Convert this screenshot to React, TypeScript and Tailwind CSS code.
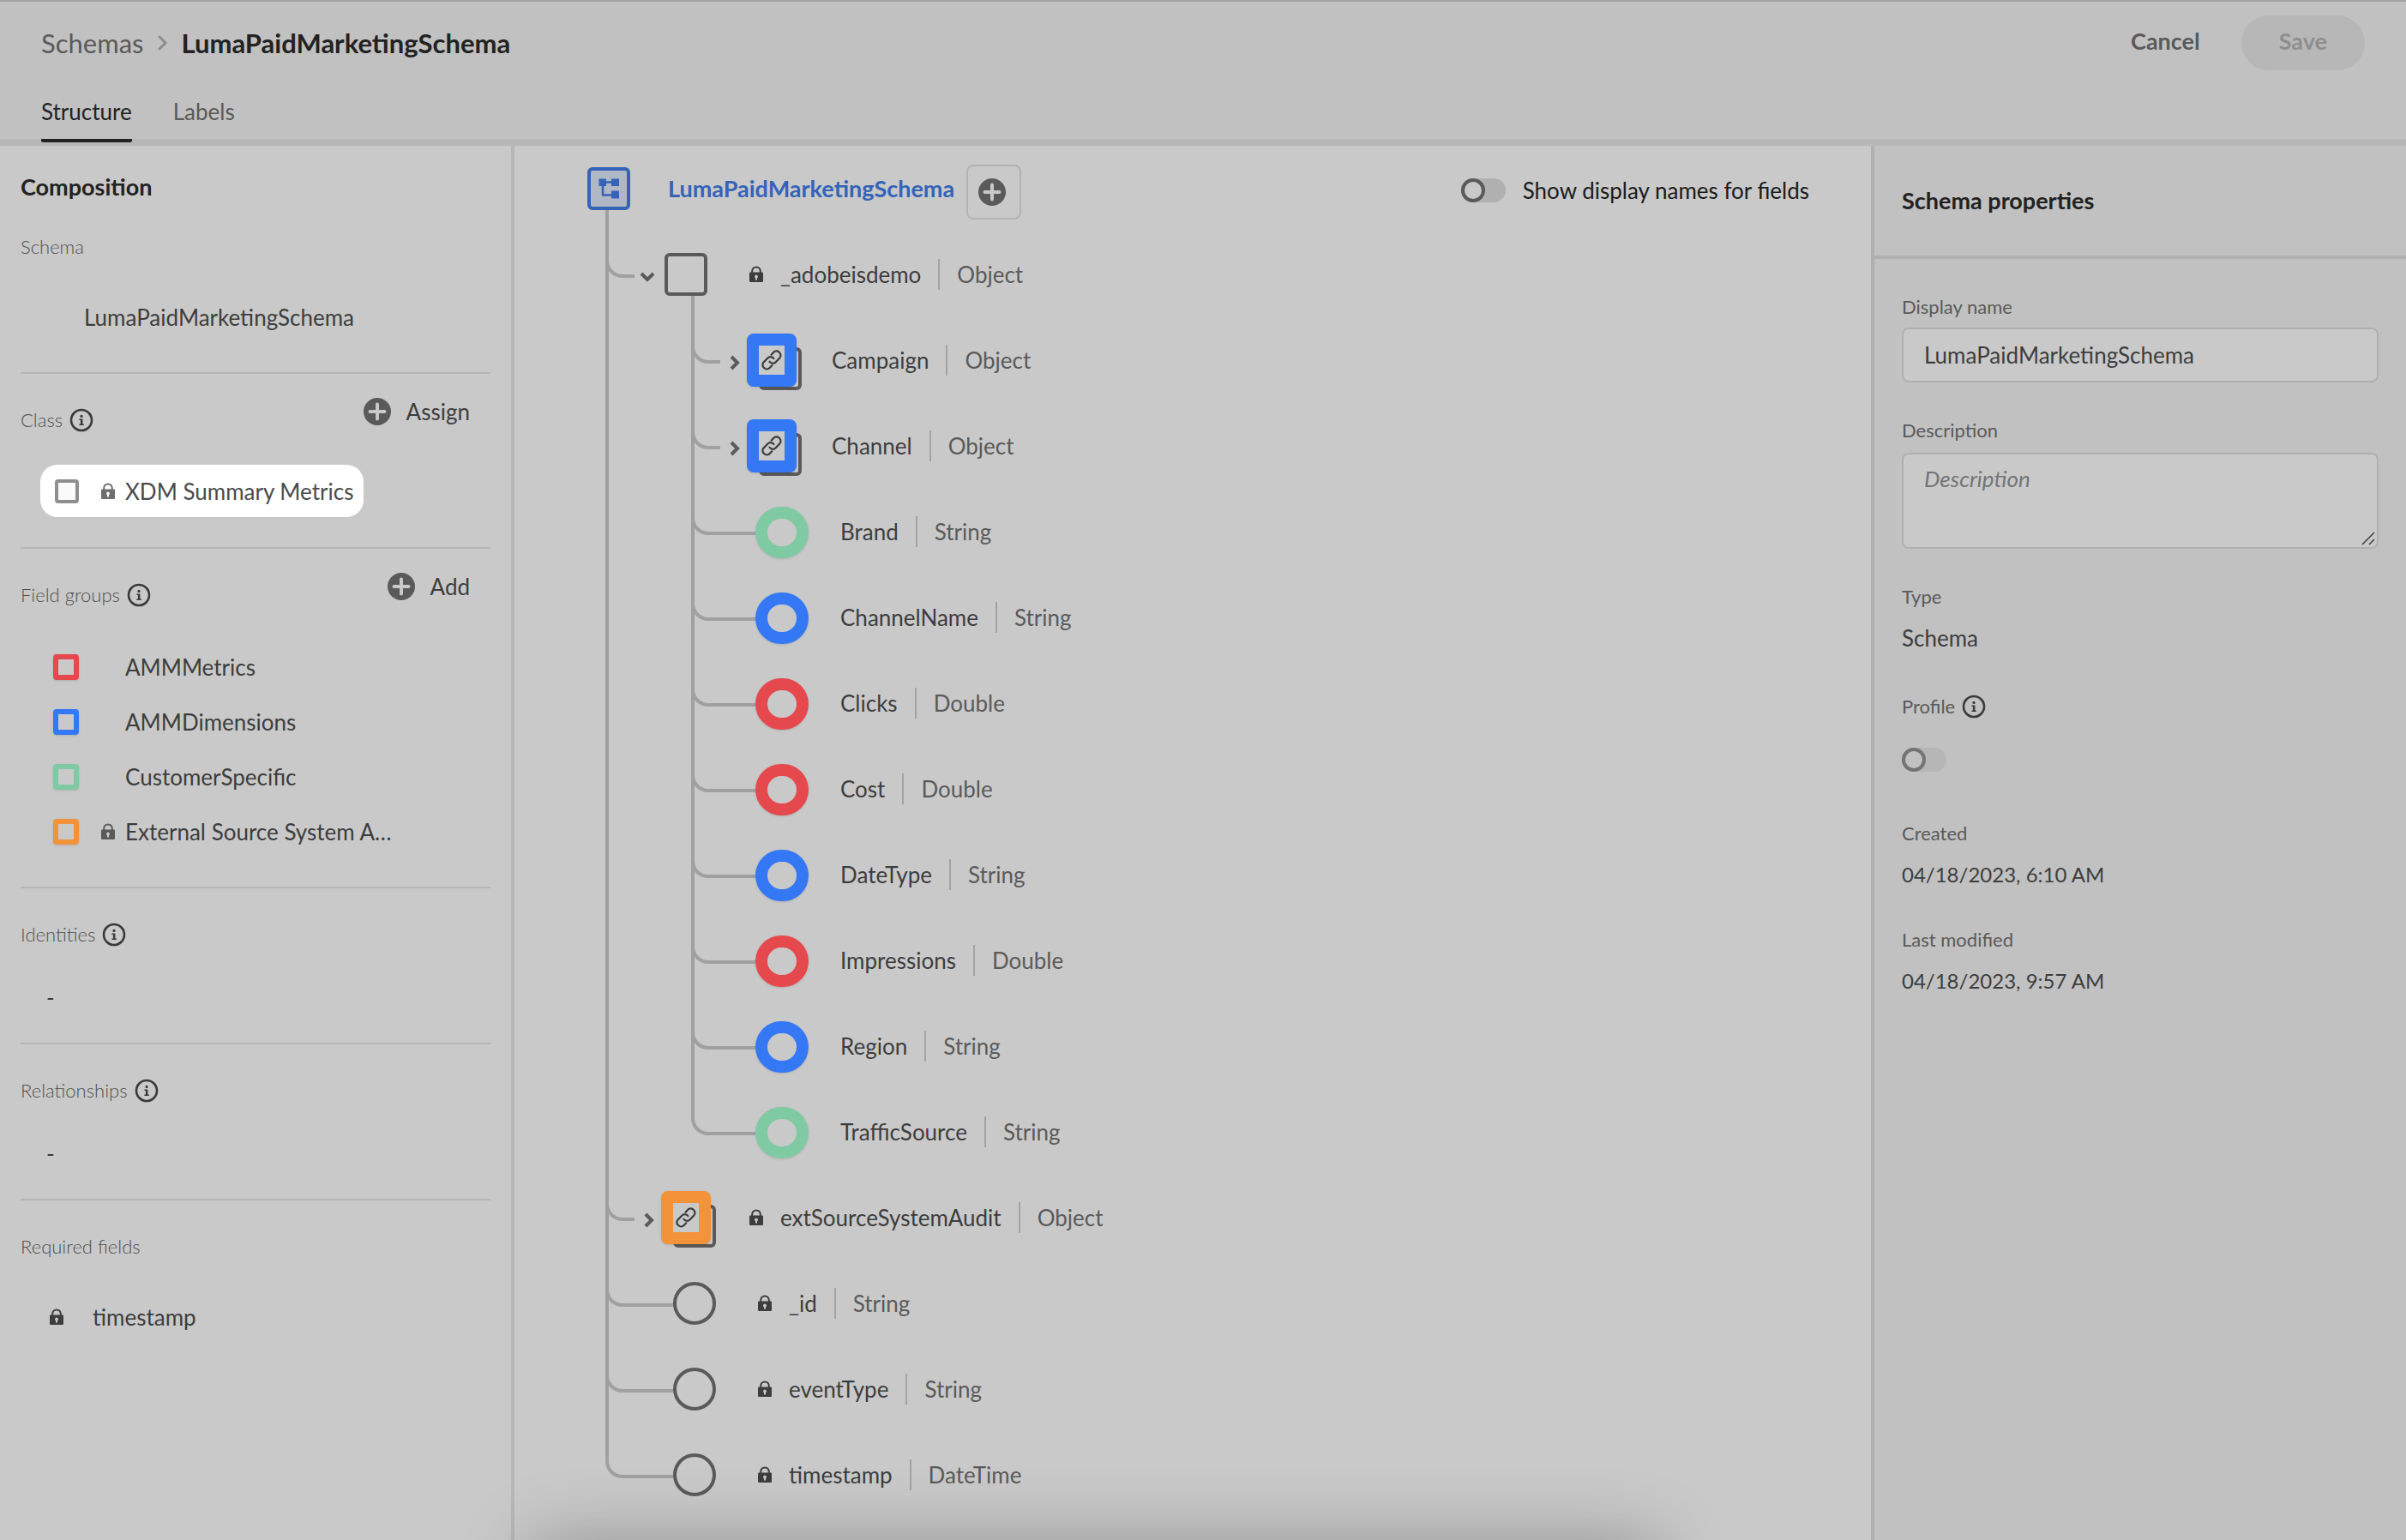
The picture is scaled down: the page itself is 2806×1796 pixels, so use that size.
import { useState, type ReactNode } from "react";

type IconProps = { className?: string };

function InfoIcon({ className = "" }: IconProps) {
  return (
    <svg viewBox="0 0 28 28" className={`size-7 shrink-0 text-[#3a3a3a] ${className}`} aria-hidden="true">
      <circle cx="14" cy="14" r="12" fill="none" stroke="currentColor" strokeWidth="2.6" />
      <circle cx="14" cy="9.4" r="1.6" fill="currentColor" />
      <path d="M11.4 12.4h4v6h1.4v1.6h-5.4v-1.6h1.5v-4.4h-1.5z" fill="currentColor" />
    </svg>
  );
}

function LockIcon({ className = "" }: IconProps) {
  return (
    <svg viewBox="0 0 24 24" className={`size-6 shrink-0 ${className}`} aria-hidden="true">
      <path d="M7.2 11V8.2a4.8 4.8 0 0 1 9.6 0V11" fill="none" stroke="currentColor" strokeWidth="2" />
      <path
        fillRule="evenodd"
        fill="currentColor"
        d="M5 9.6h14a1 1 0 0 1 1 1V20a1 1 0 0 1-1 1H5a1 1 0 0 1-1-1v-9.4a1 1 0 0 1 1-1zM12 12.6a2 2 0 0 0-1 3.7V18.4h2v-2.1a2 2 0 0 0-1-3.7z"
      />
    </svg>
  );
}

function PlusCircleIcon() {
  return (
    <svg viewBox="0 0 32 32" className="size-8 shrink-0" aria-hidden="true">
      <circle cx="16" cy="16" r="16" fill="#5a5a5a" />
      <path d="M16 7.5v17M7.5 16h17" stroke="#c9c9c9" strokeWidth="4" strokeLinecap="round" />
    </svg>
  );
}

function SchemaIcon() {
  return (
    <svg viewBox="0 0 26 26" className="size-[26px]" aria-hidden="true">
      <path d="M5.5 5.5h15M6 5.5v15h14" fill="none" stroke="#3463b8" strokeWidth="2.6" strokeLinejoin="round" />
      <path d="M1.5 1.5h8.5v8.5h-8.5zM16 1.5h9v8.5h-9zM16 15.5h9v9h-9z" fill="#3463b8" />
    </svg>
  );
}

function ChainIcon() {
  return (
    <svg viewBox="0 0 24 24" className="size-[26px]" fill="none" stroke="#3a3a3a" strokeWidth="2" strokeLinecap="round" aria-hidden="true">
      <path d="M11.6 6.2l2.5-2.7a4 4 0 0 1 5.7-.2l.6.6a4 4 0 0 1 .2 5.7l-4.5 4.7a4 4 0 0 1-5.7.1l-.7-.8" />
      <path d="M12.3 17.8l-2.5 2.6a4 4 0 0 1-5.7.2l-.6-.6a4 4 0 0 1-.2-5.7l4.5-4.7a4 4 0 0 1 5.7-.1l.7.8" />
    </svg>
  );
}

function Chevron({ className = "" }: IconProps) {
  return (
    <svg viewBox="0 0 12 18" className={className} fill="none" stroke="currentColor" strokeWidth="4" aria-hidden="true">
      <path d="M2 2l7 7-7 7" />
    </svg>
  );
}

const switchClass =
  "relative h-7 w-[52px] shrink-0 appearance-none rounded-full bg-[#b0b0b0] before:absolute before:left-0 before:top-0 before:size-7 before:rounded-full before:border-4 before:border-[#5a5a5a] before:bg-[#c9c9c9] disabled:bg-[#b6b6b6] disabled:before:border-[#737373] disabled:before:bg-[#c1c1c1]";

/* ---------- Composition rail ---------- */

type SectionProps = { title: string; info?: boolean; action?: string; last?: boolean; children: ReactNode };

function RailSection({ title, info, action, last, children }: SectionProps) {
  return (
    <section className={last ? "pt-7" : "border-b-2 border-[#b5b5b5] pb-8 pt-7"}>
      <div className="mb-9 flex items-start justify-between">
        <h3 className="mt-2.5 flex items-center gap-2 text-[22px] leading-8 font-light text-[#505050]">
          {title}
          {info && <InfoIcon />}
        </h3>
        {action && (
          <button type="button" className="mr-6 flex items-center gap-[18px] text-[26px] leading-8 text-[#3d3d3d]">
            <PlusCircleIcon />
            {action}
          </button>
        )}
      </div>
      {children}
    </section>
  );
}

const fieldGroups = [
  { name: "AMMMetrics", color: "border-[#e5484d]", locked: false },
  { name: "AMMDimensions", color: "border-[#3478f6]", locked: false },
  { name: "CustomerSpecific", color: "border-[#7fc9a3]", locked: false },
  { name: "External Source System A…", color: "border-[#f29339]", locked: true },
];

function CompositionRail() {
  return (
    <aside className="w-[600px] shrink-0 border-r-4 border-[#b7b7b7] px-6 pt-8 text-[26px] leading-8 text-[#3d3d3d]">
      <h2 className="text-[27px] leading-8 font-bold text-[#222222]">Composition</h2>
      <div className="border-b-2 border-[#b5b5b5] pb-12 pt-[38px]">
        <h3 className="text-[22px] leading-8 font-light text-[#505050]">Schema</h3>
        <p className="mt-[50px] pl-[74px]">LumaPaidMarketingSchema</p>
      </div>
      <RailSection title="Class" info action="Assign">
        <div className="h-16">
          <label className="ml-[23px] inline-flex h-[61px] items-center rounded-[20px] bg-white pl-[17px] pr-3 text-[#4b4b4b]">
            <input type="checkbox" className="size-7 appearance-none rounded-[4px] border-4 border-[#8e8e8e] bg-[#fafafa]" />
            <LockIcon className="ml-[22px] mr-2 text-[#6e6e6e]" />
            XDM Summary Metrics
          </label>
        </div>
      </RailSection>
      <RailSection title="Field groups" info action="Add">
        <ul>
          {fieldGroups.map((group) => (
            <li key={group.name} className="flex h-16 items-center pl-[38px]">
              <span className={`size-[30px] rounded-[4px] border-[6px] shadow ${group.color}`} />
              <span className="ml-[22px] mr-2 size-6">{group.locked && <LockIcon className="text-[#5a5a5a]" />}</span>
              {group.name}
            </li>
          ))}
        </ul>
      </RailSection>
      <RailSection title="Identities" info>
        <p className="pl-[30px] leading-[42px]">-</p>
      </RailSection>
      <RailSection title="Relationships" info>
        <p className="pl-[30px] leading-[42px]">-</p>
      </RailSection>
      <RailSection title="Required fields" last>
        <div className="flex h-[60px] items-center gap-[30px] pl-[30px]">
          <LockIcon />
          timestamp
        </div>
      </RailSection>
    </aside>
  );
}

/* ---------- Schema tree ---------- */

type Tone = "blue" | "green" | "red" | "orange";
type Field = { name: string; type: string; tone?: Tone; locked?: boolean; expanded?: boolean; children?: Field[] };

const toneBorder: Record<Tone, string> = {
  blue: "border-[#3478f6]",
  green: "border-[#7fc9a3]",
  red: "border-[#e5484d]",
  orange: "border-[#f29339]",
};

const fields: Field[] = [
  {
    name: "_adobeisdemo",
    type: "Object",
    locked: true,
    expanded: true,
    children: [
      { name: "Campaign", type: "Object", tone: "blue" },
      { name: "Channel", type: "Object", tone: "blue" },
      { name: "Brand", type: "String", tone: "green" },
      { name: "ChannelName", type: "String", tone: "blue" },
      { name: "Clicks", type: "Double", tone: "red" },
      { name: "Cost", type: "Double", tone: "red" },
      { name: "DateType", type: "String", tone: "blue" },
      { name: "Impressions", type: "Double", tone: "red" },
      { name: "Region", type: "String", tone: "blue" },
      { name: "TrafficSource", type: "String", tone: "green" },
    ],
  },
  { name: "extSourceSystemAudit", type: "Object", tone: "orange", locked: true },
  { name: "_id", type: "String", locked: true },
  { name: "eventType", type: "String", locked: true },
  { name: "timestamp", type: "DateTime", locked: true },
];

function ObjectGlyph({ tone }: { tone?: Tone }) {
  if (!tone) return <span className="block size-[50px] rounded-[6px] border-4 border-[#5a5a5a]" />;
  return (
    <>
      <span className="absolute left-2.5 top-2.5 size-[50px] rounded-[6px] border-4 border-[#5a5a5a]" />
      <span
        className={`absolute -left-1 -top-1.5 flex h-[62px] w-[58px] items-center justify-center rounded-[8px] border-[14px] bg-[#c9c9c9] shadow ${toneBorder[tone]}`}
      >
        <ChainIcon />
      </span>
    </>
  );
}

function LeafGlyph({ tone }: { tone?: Tone }) {
  if (!tone) return <span className="block size-[50px] rounded-full border-4 border-[#5a5a5a]" />;
  return <span className={`absolute -left-1 -top-1 h-[60px] w-[62px] rounded-full border-[14px] shadow ${toneBorder[tone]}`} />;
}

function TreeNode({ field, last }: { field: Field; last: boolean }) {
  const isObject = field.type === "Object";
  return (
    <li className="relative">
      {!last && <span className="absolute inset-y-0 left-0 w-1 bg-[#a0a0a0]" />}
      <div className="flex h-[100px] items-center">
        <span
          className={`h-[54px] shrink-0 self-start rounded-bl-[20px] border-b-4 border-l-4 border-[#a0a0a0] ${
            isObject ? "w-[34px]" : "w-[79px]"
          }`}
        />
        {isObject && (
          <button
            type="button"
            aria-label={`Toggle ${field.name}`}
            className={`mr-[5px] flex w-[30px] items-center justify-center pt-1.5 text-[#5a5a5a] ${field.expanded ? "" : "pl-1"}`}
          >
            <Chevron className={field.expanded ? "h-[18px] w-3 rotate-90" : "h-[18px] w-3"} />
          </button>
        )}
        <span className="relative mr-[35px] h-[50px] w-[60px] shrink-0">
          {isObject ? <ObjectGlyph tone={field.tone} /> : <LeafGlyph tone={field.tone} />}
        </span>
        {field.locked && <LockIcon className="mr-4" />}
        <span>{field.name}</span>
        <span className="mx-5 h-9 w-0.5 bg-[#a3a3a3]" />
        <span className="text-[#5a5a5a]">{field.type}</span>
      </div>
      {field.children && (
        <ul className="relative ml-[100px]">
          <li aria-hidden="true" className="absolute -top-[25px] left-0 h-[25px] w-1 bg-[#a0a0a0]" />
          {field.children.map((child, i) => (
            <TreeNode key={child.name} field={child} last={i === field.children!.length - 1} />
          ))}
        </ul>
      )}
    </li>
  );
}

function SchemaTree() {
  const [showNames, setShowNames] = useState(false);
  return (
    <main className="min-w-0 flex-1 pb-6 text-[26px] leading-8 text-[#3d3d3d]">
      <div className="flex h-[100px] items-center pl-[85px] pr-[72px]">
        <span className="flex size-[50px] items-center justify-center rounded-[6px] border-4 border-[#3463b8] bg-[#b0b7c5]">
          <SchemaIcon />
        </span>
        <a href="#schema" className="ml-11 text-[27px] leading-8 font-bold text-[#3463b8]">
          LumaPaidMarketingSchema
        </a>
        <button
          type="button"
          aria-label="Add field"
          className="ml-3.5 mt-2 flex size-16 items-center justify-center rounded-[8px] border-2 border-[#b3b3b3] pr-1"
        >
          <PlusCircleIcon />
        </button>
        <label className="ml-auto flex items-center gap-5 pt-1 text-[#1b1b1b]">
          <input type="checkbox" role="switch" checked={showNames} onChange={(e) => setShowNames(e.target.checked)} className={switchClass} />
          Show display names for fields
        </label>
      </div>
      <ul className="relative ml-[106px]">
        <li aria-hidden="true" className="absolute -top-[25px] left-0 h-[25px] w-1 bg-[#a0a0a0]" />
        {fields.map((field, i) => (
          <TreeNode key={field.name} field={field} last={i === fields.length - 1} />
        ))}
      </ul>
    </main>
  );
}

/* ---------- Properties rail ---------- */

function PropertiesRail() {
  return (
    <aside className="w-[624px] shrink-0 border-l-4 border-[#b0b0b0] bg-[#c1c1c1] text-[26px] leading-8 text-[#3d3d3d]">
      <div className="flex h-[132px] items-center border-b-4 border-[#b0b0b0] px-8">
        <h2 className="text-[27px] leading-8 font-bold text-[#222222]">Schema properties</h2>
      </div>
      <div className="flex flex-col px-8 pt-10">
        <label htmlFor="display-name" className="text-[22px] leading-8 text-[#5a5a5a]">
          Display name
        </label>
        <input
          id="display-name"
          type="text"
          defaultValue="LumaPaidMarketingSchema"
          className="mt-2 h-16 w-full rounded-[8px] border-2 border-[#b0b0b0] bg-[#c9c9c9] px-6"
        />
        <label htmlFor="description" className="mt-10 text-[22px] leading-8 text-[#5a5a5a]">
          Description
        </label>
        <div className="relative mt-2.5 h-28">
          <textarea
            id="description"
            placeholder="Description"
            className="block size-full resize-none rounded-[8px] border-2 border-[#b0b0b0] bg-[#c9c9c9] px-6 py-3 placeholder:italic placeholder:text-[#747474]"
          />
          <svg viewBox="0 0 16 16" className="absolute bottom-1 right-1 size-4" stroke="#3d3d3d" strokeWidth="1.5" aria-hidden="true">
            <path d="M1 15L15 1M9 15l6-6" />
          </svg>
        </div>
        <h3 className="mt-10 text-[22px] leading-8 text-[#5a5a5a]">Type</h3>
        <p className="mt-4">Schema</p>
        <label htmlFor="profile" className="mt-12 flex items-center gap-2 text-[22px] leading-8 text-[#5a5a5a]">
          Profile
          <InfoIcon />
        </label>
        <input id="profile" type="checkbox" role="switch" disabled className={`mt-8 ${switchClass}`} />
        <h3 className="mt-14 text-[22px] leading-8 text-[#5a5a5a]">Created</h3>
        <p className="mt-4 text-[24px] leading-8">04/18/2023, 6:10 AM</p>
        <h3 className="mt-11 text-[22px] leading-8 text-[#5a5a5a]">Last modified</h3>
        <p className="mt-4 text-[24px] leading-8">04/18/2023, 9:57 AM</p>
      </div>
    </aside>
  );
}

/* ---------- Page ---------- */

export default function App() {
  return (
    <div className="relative flex min-h-screen flex-col overflow-hidden bg-[#c9c9c9] font-[Lato,'Noto_Sans',sans-serif]">
      <header className="flex justify-between border-b-8 border-t-2 border-b-[#b7b7b7] border-t-[#a3a3a3] bg-[#c1c1c1] pl-12 pr-12">
        <div>
          <nav aria-label="Breadcrumb" className="flex items-center pt-7 text-[31px] leading-10">
            <a href="#schemas" className="text-[#5a5a5a]">
              Schemas
            </a>
            <svg viewBox="0 0 12 18" className="mx-4 h-[18px] w-3" fill="none" stroke="#8e8e8e" strokeWidth="3" strokeLinecap="round" aria-hidden="true">
              <path d="M2 2l7 7-7 7" />
            </svg>
            <h1 className="font-bold text-[#222222]">LumaPaidMarketingSchema</h1>
          </nav>
          <div role="tablist" className="mt-10 flex gap-12 text-[26px] leading-10">
            <button type="button" role="tab" aria-selected="true" className="-mb-1 h-[56px] rounded-b-[2px] border-b-4 border-[#222222] pb-3 text-[#222222]">
              Structure
            </button>
            <button type="button" role="tab" aria-selected="false" className="h-[52px] pb-3 text-[#5a5a5a]">
              Labels
            </button>
          </div>
        </div>
        <div className="flex h-16 items-center gap-12 pt-8 text-[27px] leading-8 font-bold">
          <button type="button" className="pb-1 text-[#5a5a5a]">
            Cancel
          </button>
          <button type="button" disabled className="h-16 shrink-0 rounded-full bg-[#b7b7b7] px-11 pb-1 text-[#8e8e8e]">
            Save
          </button>
        </div>
      </header>
      <div className="flex flex-1">
        <CompositionRail />
        <SchemaTree />
        <PropertiesRail />
      </div>
      <div aria-hidden="true" className="pointer-events-none absolute -bottom-24 left-[22%] h-24 w-[47%] shadow-[0_0_80px_rgba(0,0,0,0.26)]" />
    </div>
  );
}
